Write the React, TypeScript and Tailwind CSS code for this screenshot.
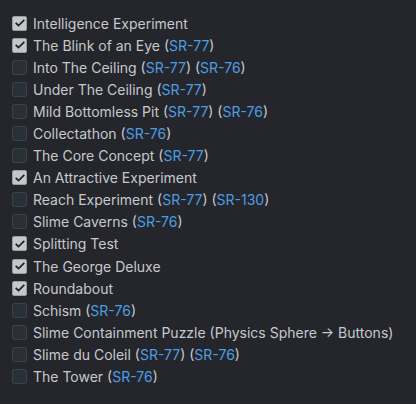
import React from 'react';

type Level = {
  name: string;
  done: boolean;
  refs?: string[];
};

const LEVELS: Level[] = [
  { name: 'Intelligence Experiment', done: true },
  { name: 'The Blink of an Eye', done: true, refs: ['SR-77'] },
  { name: 'Into The Ceiling', done: false, refs: ['SR-77', 'SR-76'] },
  { name: 'Under The Ceiling', done: false, refs: ['SR-77'] },
  { name: 'Mild Bottomless Pit', done: false, refs: ['SR-77', 'SR-76'] },
  { name: 'Collectathon', done: false, refs: ['SR-76'] },
  { name: 'The Core Concept', done: false, refs: ['SR-77'] },
  { name: 'An Attractive Experiment', done: true },
  { name: 'Reach Experiment', done: false, refs: ['SR-77', 'SR-130'] },
  { name: 'Slime Caverns', done: false, refs: ['SR-76'] },
  { name: 'Splitting Test', done: true },
  { name: 'The George Deluxe', done: true },
  { name: 'Roundabout', done: true },
  { name: 'Schism', done: false, refs: ['SR-76'] },
  { name: 'Slime Containment Puzzle (Physics Sphere \u2192 Buttons)', done: false },
  { name: 'Slime du Coleil', done: false, refs: ['SR-77', 'SR-76'] },
  { name: 'The Tower', done: false, refs: ['SR-76'] },
];

const Check: React.FC<{ checked: boolean }> = ({ checked }) =>
  checked ? (
    <span className="w-[15px] h-[15px] shrink-0 rounded-[2px] bg-[#c6c7c9] border border-[#9a9ca0] flex items-center justify-center">
      <svg viewBox="0 0 16 16" className="w-[12px] h-[12px]" fill="none" stroke="#1e2024" strokeWidth={2.2}>
        <path d="M3 8.5l3 3 7-7" strokeLinecap="square" />
      </svg>
    </span>
  ) : (
    <span className="w-[15px] h-[15px] shrink-0 rounded-[2px] bg-[#2a3037] border border-[#3b4148]" />
  );

const App: React.FC = () => {
  return (
    <div
      className="w-[416px] h-[404px] bg-[#24262b] pt-[12px] pl-[12px] text-[14px] text-[#c8c9cb]"
      style={{ fontFamily: 'Inter, "Noto Sans", sans-serif' }}
    >
      {LEVELS.map((lvl) => (
        <div key={lvl.name} className="h-[22.1px] flex items-center gap-[6px] whitespace-nowrap">
          <Check checked={lvl.done} />
          <span>
            {lvl.name}
            {lvl.refs?.map((r) => (
              <React.Fragment key={r}>
                {' ('}
                <span className="text-[#4c9de6]">{r}</span>
                {')'}
              </React.Fragment>
            ))}
          </span>
        </div>
      ))}
    </div>
  );
};

export default App;
